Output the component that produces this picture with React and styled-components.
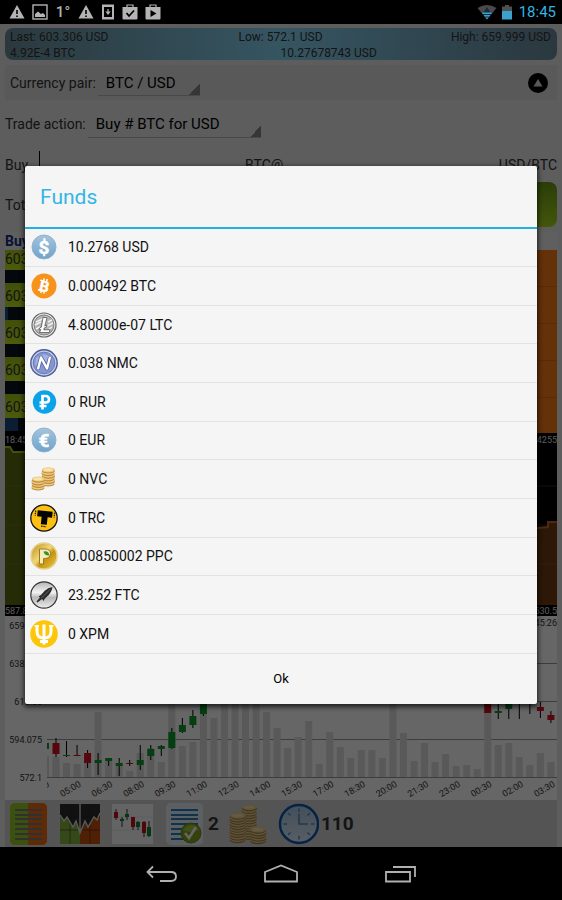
import React from 'react';
import styled, { createGlobalStyle } from 'styled-components';

const GlobalStyle = createGlobalStyle`
  *, *::before, *::after { box-sizing: border-box; }
  body {
    margin: 0;
    background: #000;
    font-family: Roboto, "Liberation Sans", sans-serif;
    font-size: 14px;
    color: #333;
  }
  button, input, select { font: inherit; color: inherit; }
  ul { list-style: none; margin: 0; padding: 0; }
`;

/* --- device --- */
const Device = styled.div`
  min-height: 100vh;
  display: flex;
  flex-direction: column;
`;

const StatusBar = styled.header`
  height: 24px;
  padding: 0 6px 0 9px;
  display: flex;
  align-items: center;
  justify-content: space-between;
  background: #000;
  color: #b4b4b4;
`;

const StatusGroup = styled.div`
  display: flex;
  align-items: center;
  gap: ${({ $gap }) => $gap}px;

  svg { display: block; }
`;

const Temperature = styled.span`
  width: 16px;
  text-align: center;
  font-size: 15px;
  font-weight: 500;
`;

const Clock = styled.time`
  font-size: 15px;
  line-height: 24px;
  color: #33b5e5;
  margin-left: 2px;
`;

const Screen = styled.main`
  position: relative;
  flex: 1;
  display: flex;
  flex-direction: column;
  padding: 4px 5px 0;
  background: #e8e8e8;
`;

const NavBar = styled.nav`
  height: 53px;
  display: flex;
  justify-content: center;
  background: #000;
`;

const NavButton = styled.button`
  width: 120px;
  padding: 0;
  border: 0;
  background: none;
  display: flex;
  align-items: center;
  justify-content: center;
`;

/* --- ticker --- */
const Ticker = styled.section`
  height: 32px;
  padding: 1px 6px 0 5px;
  border-radius: 8px;
  background: linear-gradient(90deg, #6c8f9e, #86d5f4 50%, #6c8c9e);
  font-size: 12px;
  line-height: 16px;
`;

const TickerRow = styled.div`
  display: grid;
  grid-template-columns: 1fr auto 1fr;

  span:last-child { text-align: right; }
`;

const BalanceRow = styled.div`
  display: grid;
  grid-template-columns: 1fr 1fr;
`;

/* --- form --- */
const FormRow = styled.div`
  display: flex;
  align-items: center;
  height: ${({ $height }) => $height}px;
  padding: ${({ $boxed }) => ($boxed ? '0 9px 0 5px' : '0')};
  margin-top: ${({ $boxed }) => ($boxed ? 5 : 0)}px;
  background: ${({ $boxed }) => ($boxed ? '#dfdfdf' : 'none')};
`;

const Spinner = styled.select`
  appearance: none;
  width: ${({ $width }) => $width}px;
  height: 27px;
  margin-left: 2px;
  padding: 1px 12px 0 8px;
  border: 0;
  border-bottom: 1px solid #b5b5b5;
  border-radius: 0;
  background: linear-gradient(135deg, transparent 50%, #888 50%) right bottom / 11px 11px no-repeat;
  font-size: 15px;
  color: #000;
`;

const Collapse = styled.button`
  margin-left: auto;
  width: 20px;
  height: 20px;
  padding: 0;
  border: 0;
  border-radius: 50%;
  background: #000;
  display: flex;
  align-items: center;
  justify-content: center;
`;

const AmountRow = styled.div`
  display: grid;
  grid-template-columns: 240px auto 1fr;
  align-items: center;
  height: 34px;

  > span:last-child { text-align: right; }
`;

const Amount = styled.label`
  display: flex;
  align-items: center;
`;

const AmountInput = styled.input`
  width: 120px;
  height: 28px;
  margin-left: 11px;
  padding: 0;
  border: 0;
  border-left: 1px solid #000;
  background: none;
`;

const TradeButton = styled.button`
  margin-left: auto;
  width: 140px;
  height: 45px;
  border: 0;
  border-radius: 8px;
  background: linear-gradient(#6a9a16, #a8d81e);
`;

/* --- order book --- */
const BookTitle = styled.h2`
  height: 18px;
  margin: 5px 0 0;
  background: #ededed;
  font-size: 14px;
  font-weight: 700;
  line-height: 18px;
  color: #142c80;
`;

const Book = styled.section`
  display: grid;
  grid-template-columns: 1fr 1fr;
  grid-template-rows: 100%;
  height: 183px;
  overflow: hidden;
`;

const Bids = styled.ul`
  display: flex;
  flex-direction: column;
  justify-content: flex-end;
  padding-bottom: 2px;
  background: #000;
`;

const Bid = styled.li`
  flex: none;
  padding-bottom: 13px;
  background: linear-gradient(90deg, #1b4a80 ${({ $depth }) => $depth}px, #0a1420 ${({ $depth }) => $depth}px);

  span {
    display: block;
    height: 24px;
    line-height: 26px;
    font-size: 14px;
    background: linear-gradient(#a4c41a, #c0e41c);
  }
`;

const Asks = styled.div`
  background: repeating-linear-gradient(#fa7a16 0 36px, #e06a10 36px 37px);
`;

const Strip = styled.div`
  display: flex;
  justify-content: space-between;
  align-items: center;
  height: ${({ $height }) => $height}px;
  background: #000;
  color: #e0e0e0;
  font-size: 9px;
`;

const Chart = styled.svg`
  display: block;
  width: 100%;
  height: auto;
  background: ${({ $dark }) => ($dark ? '#000' : '#fff')};
  font-size: 9px;
`;

/* --- bottom toolbar --- */
const Toolbar = styled.footer`
  flex: 1;
  min-height: 47px;
  display: flex;
  align-items: center;
  gap: 10px;
  padding-left: 3px;
  background: #d2d2d2;
`;

const Tool = styled.button`
  display: flex;
  align-items: center;
  gap: 2px;
  padding: 0;
  border: 0;
  background: none;
  font-size: 19px;
  font-weight: 700;

  svg { display: block; }
`;

/* --- dialog --- */
const Scrim = styled.div`
  position: absolute;
  inset: 0;
  display: flex;
  align-items: center;
  justify-content: center;
  padding: 0 25px 2px;
  background: rgba(0, 0, 0, .6);
`;

const Dialog = styled.section`
  width: 100%;
  border-radius: 2px;
  background: #f5f5f5;
  box-shadow: 0 2px 5px 1px rgba(0, 0, 0, .7);
`;

const DialogTitle = styled.h1`
  margin: 0;
  padding: 1px 15px 0;
  border-bottom: 2px solid #22b0e2;
  font-size: 21px;
  font-weight: 400;
  line-height: 60px;
  color: #33b5e5;
`;

const FundList = styled.ul`
  display: grid;
  grid-auto-rows: 1fr;
  height: 425px;
`;

const Fund = styled.li`
  display: flex;
  align-items: center;
  gap: 10px;
  padding-left: 5px;
  border-bottom: 1px solid #e2e2e2;
  color: #111;

  svg { display: block; }
`;

const OkButton = styled.button`
  display: block;
  width: 100%;
  height: 50px;
  padding: 0;
  border: 0;
  background: none;
  font-size: 13px;
  color: #000;
`;

/* --- status icons --- */
const Warning = () => (
  <svg width="16" height="16" viewBox="0 0 16 16">
    <path d="M8 1 L15.5 14.500 H.5Z" fill="#b4b4b4" />
    <path d="M8 6V10M8 11.500V13" stroke="#000" strokeWidth="1.600" />
  </svg>
);

const Picture = () => (
  <svg width="16" height="16" viewBox="0 0 16 16">
    <rect x="1" y="1" width="14" height="14" fill="none" stroke="#b4b4b4" strokeWidth="1.400" />
    <path d="M3 13V10L6 7.500L9 10L11 9L13 11V13Z" fill="#b4b4b4" />
  </svg>
);

const Download = () => (
  <svg width="14" height="16" viewBox="0 0 14 16">
    <rect x="1" y=".5" width="12" height="15" fill="#b4b4b4" />
    <rect x="3" y="3" width="8" height="10" fill="#000" />
    <path d="M7 5V8.500M5.500 8L7 10L8.500 8Z" stroke="#b4b4b4" strokeWidth="1.200" fill="#b4b4b4" />
  </svg>
);

const Bag = ({ children }) => (
  <svg width="16" height="16" viewBox="0 0 16 16">
    <path d="M5 4V1H11V4" fill="none" stroke="#b4b4b4" strokeWidth="1.200" />
    <path d="M.5 3H15.500V14.500Q15.500 15.500 14.500 15.500H1.500Q.5 15.500 .5 14.500Z" fill="#b4b4b4" />
    {children}
  </svg>
);

const Wifi = () => (
  <svg width="20" height="16" viewBox="0 0 20 16">
    <path d="M10 15.500L.5 4Q10-2 19.500 4Z" fill="#4a4a4a" />
    <path d="M10 15.500L5 9Q10 6.500 15 9Z" fill="#33a5d0" />
    <path d="M10 3L13.500 8.500H6.500Z" fill="#1c2c34" />
    <path d="M6 10.500H14M8 13H12" stroke="#0c3040" />
  </svg>
);

const Battery = () => (
  <svg width="10" height="16" viewBox="0 0 10 16">
    <path d="M3 1H7V2.500H10V7H0V2.500H3Z" fill="#505050" />
    <rect y="7" width="10" height="8.500" fill="#3aa2cc" />
  </svg>
);

/* --- coins --- */
const GlossyCoin = ({ id, sign }) => (
  <svg width="28" height="28" viewBox="0 0 28 28">
    <defs>
      <linearGradient id={id} x1="0" y1="0" x2="0" y2="1">
        <stop offset="0" stopColor="#a5c4dd" />
        <stop offset="1" stopColor="#6fa3cb" />
      </linearGradient>
    </defs>
    <circle cx="14" cy="14" r="12" fill={`url(#${id})`} stroke="#8fb2cd" />
    <text
      x="14"
      y="20.500"
      fontSize="19"
      fontWeight="700"
      textAnchor="middle"
      fill="#fff"
      stroke="#fff"
      strokeWidth=".5"
    >
      {sign}
    </text>
  </svg>
);

const Bitcoin = () => (
  <svg width="28" height="28" viewBox="0 0 28 28">
    <circle cx="14" cy="14" r="12.500" fill="#f7931a" />
    <g transform="rotate(13 14 14)" fill="#fff" stroke="#fff">
      <text x="14.500" y="19.500" fontSize="15" fontWeight="700" textAnchor="middle" strokeWidth=".4">B</text>
      <path d="M12.500 6.500V9M15.500 6.500V9M12.500 19V21.500M15.500 19V21.500M9 9.200H12M9 19H12" strokeWidth="1.500" />
    </g>
  </svg>
);

const Litecoin = () => (
  <svg width="28" height="28" viewBox="0 0 28 28">
    <circle cx="14" cy="14" r="12" fill="#e8e8e8" stroke="#666" strokeWidth="1.200" />
    <circle cx="14" cy="14" r="10" fill="#b4b4b4" stroke="#808080" />
    <path d="M6 11L17 6M5 14L11 11M18 11L22 9M17 15L23 12M6 18L10 16M19 18L22 16" stroke="#f0f0f0" strokeWidth="1.400" />
    <path d="M13 6.500H17L14.800 15L17 14L16.500 16L14.200 17L13.800 18.800H20L19.300 21.500H9.500L10.800 18.300L9 19L9.500 17L11.300 16.200Z" fill="#fff" stroke="#555" strokeWidth=".8" />
  </svg>
);

const Namecoin = () => (
  <svg width="28" height="28" viewBox="0 0 28 28">
    <circle cx="14" cy="14" r="13.200" fill="#c4cdea" stroke="#4c5c94" strokeWidth="1.400" />
    <circle cx="14" cy="14" r="10.800" fill="#8496d2" stroke="#6c7cb8" />
    <path d="M6 9Q14 2 22 9Q20 13 14 13T5 17Z" fill="#a4b2e2" />
    <path d="M8 20L11 8.500L17 19.500L20 8" fill="none" stroke="#5b69a0" strokeWidth="4" strokeLinejoin="round" />
    <path d="M8 20L11 8.500L17 19.500L20 8" fill="none" stroke="#fff" strokeWidth="2.400" strokeLinejoin="round" />
  </svg>
);

const Ruble = () => (
  <svg width="28" height="28" viewBox="0 0 28 28">
    <circle cx="14.500" cy="14" r="11.700" fill="#0aa2e8" />
    <path d="M12.500 21.500V8H15.500Q19 8 19 11.200T15.500 14.500H9.500M9.500 18H16.500" fill="none" stroke="#fff" strokeWidth="2.600" />
  </svg>
);

const Stack = ({ x, y, count, rx, edge = '#b27f32', top = '#eccb80' }) => (
  <g>
    {Array.from({ length: count }, (_, i) => (
      <g key={i}>
        <ellipse cx={x + (i % 2) * 0.4} cy={y - i * 2.6} rx={rx} ry={rx * 0.4} fill={edge} />
        <ellipse cx={x + (i % 2) * 0.4} cy={y - i * 2.6 - 1.2} rx={rx} ry={rx * 0.4} fill={top} />
      </g>
    ))}
    <ellipse cx={x} cy={y - count * 2.6 + 1.4} rx={rx * 0.7} ry={rx * 0.22} fill="#f8e3ae" />
  </g>
);

const Novacoin = () => (
  <svg width="28" height="28" viewBox="0 0 28 28">
    <Stack x={18} y={19} count={6} rx={6.5} edge="#c08a3c" />
    <Stack x={8} y={23} count={4} rx={6.5} edge="#c08a3c" />
  </svg>
);

const Terracoin = () => (
  <svg width="28" height="28" viewBox="0 0 28 28">
    <circle cx="14" cy="14" r="13.200" fill="#fbc010" stroke="#111" strokeWidth="1.300" />
    <g transform="rotate(6 14 14)">
      <path d="M7 7H22V13H17.500V20.500H11.500V13H7Z" fill="#050505" />
      <path d="M5 7.500V12.500M24 7.500V12.500M12 22.500H17" stroke="#222" strokeWidth="1.300" strokeDasharray="1.500 .7" />
    </g>
  </svg>
);

const Peercoin = () => (
  <svg width="28" height="28" viewBox="0 0 28 28">
    <defs>
      <linearGradient id="ppc" x1="0" y1="0" x2="1" y2="1">
        <stop offset="0" stopColor="#b98a1c" />
        <stop offset=".45" stopColor="#f0d878" />
        <stop offset=".6" stopColor="#c4920e" />
        <stop offset="1" stopColor="#f0cf50" />
      </linearGradient>
    </defs>
    <circle cx="14" cy="14" r="13" fill="url(#ppc)" stroke="#e6cf88" strokeWidth="1.500" />
    <path d="M9.500 7H15Q20.500 7 20.500 11.500T15 16.500H13.500V22H9.500Z" fill="#f4ecc0" stroke="#a07a1c" strokeWidth="1" />
    <path d="M13.500 9.500Q18.500 8 19.500 13.500Q14.500 14 13.500 9.500Z" fill="#3f8f24" />
  </svg>
);

const Feathercoin = () => (
  <svg width="28" height="28" viewBox="0 0 28 28">
    <defs>
      <linearGradient id="ftc" x1="0" y1="0" x2="0" y2="1">
        <stop offset="0" stopColor="#b4b4b4" />
        <stop offset=".4" stopColor="#f2f2f2" />
        <stop offset=".6" stopColor="#b8b8b8" />
        <stop offset="1" stopColor="#eee" />
      </linearGradient>
    </defs>
    <circle cx="14" cy="14" r="13.200" fill="url(#ftc)" stroke="#333" strokeWidth="1.200" />
    <path d="M22.500 6Q21.500 12 17 15.500L14.500 18L13.800 20L12 18L7.500 21.500L6.500 20.500L10 16.500L8.500 15.500L11 14L14.500 10Q18 6.500 22.500 6Z" fill="#2a2a2a" />
    <path d="M11.500 17L20 8.500" stroke="#777" strokeWidth=".8" />
  </svg>
);

const Primecoin = () => (
  <svg width="28" height="28" viewBox="0 0 28 28">
    <circle cx="14" cy="14" r="13.800" fill="#fdc608" />
    <path d="M7 5V11.500Q7 18 14 18T21 11.500V5M14 4.500V24.500M10 21.500H18" fill="none" stroke="#fff" strokeWidth="3" />
    <path d="M4.500 6H9M19 6H23.500" stroke="#fff" strokeWidth="1.500" />
  </svg>
);

const funds = [
  { text: '10.2768 USD', icon: <GlossyCoin id="usd" sign="$" /> },
  { text: '0.000492 BTC', icon: <Bitcoin /> },
  { text: '4.80000e-07 LTC', icon: <Litecoin /> },
  { text: '0.038 NMC', icon: <Namecoin /> },
  { text: '0 RUR', icon: <Ruble /> },
  { text: '0 EUR', icon: <GlossyCoin id="eur" sign="€" /> },
  { text: '0 NVC', icon: <Novacoin /> },
  { text: '0 TRC', icon: <Terracoin /> },
  { text: '0.00850002 PPC', icon: <Peercoin /> },
  { text: '23.252 FTC', icon: <Feathercoin /> },
  { text: '0 XPM', icon: <Primecoin /> },
];

/* --- candle chart --- */
const STEP = 10.53;
const candleX = (i) => 51 + i * STEP;

// top of every volume bar, first one is cut by the axis
const volumes = [
  140, 141, 147, 148, 144, 96, 145, 150, 155, 137, 132, 146, 84, 130, 126, 74, 102,
  74, 74, 74, 74, 96, 112, 132, 121, 105, 148, 116, 131, 142, 134, 134, 142, 74, 117,
  145, 127, 146, 138, 150, 149, 153, 74, 129, 127, 141, 149, 137, 146,
];

// [index, high, low, body top, body bottom, rising]
const candles = [
  [-1, 127, 133, 127, 133, 1], [0, 122, 141, 127, 138, 0], [1, 125, 141, 139, 140, 1],
  [2, 129, 140, 139, 140, 0], [3, 134, 152, 137, 147, 0], [4, 137, 159, 144, 147, 1],
  [5, 142, 150, 142, 145, 1], [6, 142, 160, 147, 150, 1], [7, 144, 150, 147, 148, 0],
  [8, 129, 154, 144, 149, 1], [9, 129, 144, 133, 140, 1], [10, 129, 140, 130, 133, 1],
  [11, 112, 133, 116, 132, 1], [12, 102, 117, 109, 116, 1], [13, 94, 112, 100, 109, 1],
  [14, 80, 100, 84, 98, 1], [41, 76, 97, 80, 97, 0], [42, 80, 103, 95, 97, 1],
  [43, 80, 103, 86, 93, 1], [44, 80, 103, 80, 81, 1], [45, 80, 98, 80, 81, 1],
  [46, 86, 102, 91, 95, 0], [47, 95, 107, 99, 104, 0],
];

const prices = ['659.999', '638.025', '616.05', '594.075', '572.1'];
const times = [
  '03:30', '05:00', '06:30', '08:00', '09:30', '11:00', '12:30', '14:00', '15:30',
  '17:00', '18:30', '20:00', '21:30', '23:00', '00:30', '02:00', '03:30',
];

const CandleChart = () => (
  <Chart viewBox="0 0 552 184">
    <clipPath id="plot"><rect x="42" y="0" width="510" height="184" /></clipPath>
    {prices.map((price, i) => (
      <g key={price}>
        <path d={`M42 ${9.5 + i * 38}H552`} stroke="#999" />
        <text x="37" y={13 + i * 38} textAnchor="end" fill="#333">{price}</text>
      </g>
    ))}
    <rect x="500" y="0" width="52" height="13" fill="#fff" />
    <text x="552" y="10" textAnchor="end" fill="#333">18:45:26</text>
    <g clipPath="url(#plot)">
      {volumes.map((top, i) => (
        <rect key={i} x={candleX(i - 1) - 3.5} y={top} width="7" height={161 - top} fill="#dedede" />
      ))}
      {candles.map(([i, high, low, top, bottom, up]) => (
        <g key={i}>
          <path d={`M${candleX(i)} ${high}V${low}`} stroke="#000" />
          <rect x={candleX(i) - 3.5} y={top} width="7" height={bottom - top} fill={up ? '#0c9c2c' : '#d81020'} />
        </g>
      ))}
      {times.map((time, i) => (
        <text
          key={i}
          transform={`translate(${45 + i * 31.6} 170) rotate(-30)`}
          textAnchor="end"
          fill="#333"
        >
          {time}
        </text>
      ))}
    </g>
  </Chart>
);

const DepthChart = () => (
  <Chart $dark viewBox="0 0 552 159">
    <path d="M0 40H552M0 79H552M0 118H552" stroke="#2c2c2c" />
    <path d="M0 1H5L8 6H20L60 20L150 60L260 159H0Z" fill="#5c6c12" />
    <path d="M0 1H5L8 6H20L60 20L150 60L260 159" fill="none" stroke="#a8cc18" strokeWidth="2" />
    <path d="M290 159L400 110L500 84L532 82L543 81V76H552V159Z" fill="#703a10" />
    <path d="M290 159L400 110L500 84L532 82L543 81V76H552" fill="none" stroke="#c8641c" strokeWidth="2" />
    <path d="M0 40H240M0 79H240M0 118H240M400 118H552" stroke="#7a8440" strokeOpacity=".4" />
  </Chart>
);

/* --- toolbar icons --- */
const lines = [7, 12, 16, 21, 26, 31, 36];

const BookIcon = () => (
  <svg width="42" height="42" viewBox="0 0 42 42">
    <path d="M20 0H7Q2 0 2 5V37Q2 42 7 42H20Z" fill="#9acb24" />
    <path d="M20 0H34Q39 0 39 5V37Q39 42 34 42H20Z" fill="#ee6c10" />
    {lines.map((y) => <path key={y} d={`M7 ${y}H34`} stroke="#74787c" strokeWidth="2" />)}
  </svg>
);

const DepthIcon = () => (
  <svg width="42" height="42" viewBox="0 0 42 42">
    <rect y="1" width="40" height="40" fill="#2c2c2c" />
    <path d="M0 12L4 18L7 14L13 24L16 18L20 30V41H0Z" fill="#86b43c" />
    <path d="M20 30L25 18L28 24L34 14L37 17L40 10V41H20Z" fill="#c8500c" />
    <path d="M0 14H40M0 27H40M10 1V41M30 1V41" stroke="#222" strokeOpacity=".5" />
    <path d="M0 12L4 18L7 14L13 24L16 18L20 30L25 18L28 24L34 14L37 17L40 10M20 1V30" fill="none" stroke="#ddd" strokeWidth="1.400" />
  </svg>
);

const miniCandles = [
  [4, 6, 17, 9, 15, 0], [10, 14, 24, 16, 18, 1], [15, 6, 17, 11, 14, 1], [21, 14, 27, 14, 24, 0],
  [26, 18, 27, 19, 24, 1], [32, 18, 34, 19, 30, 0], [37, 18, 34, 24, 33, 1],
];

const CandlesIcon = () => (
  <svg width="42" height="42" viewBox="0 0 42 42">
    <rect y="1" width="41" height="40" fill="#fbfbfb" />
    <path d="M0 14H41M0 27H41" stroke="#e8e8e8" />
    {miniCandles.map(([x, high, low, top, bottom, up]) => (
      <g key={x}>
        <path d={`M${x} ${high}V${low}`} stroke="#333" />
        <rect x={x - 2} y={top} width="4" height={bottom - top} fill={up ? '#0c8c24' : '#c8101c'} />
      </g>
    ))}
  </svg>
);

const OrdersIcon = () => (
  <svg width="42" height="42" viewBox="0 0 42 42">
    <rect x="2" y="0" width="37" height="42" rx="5" fill="#e6f0f8" />
    {lines.map((y) => <path key={y} d={`M7 ${y}H34`} stroke="#2480b8" strokeWidth="2" />)}
    <circle cx="27" cy="30" r="10" fill="#86a41c" stroke="#6c8814" />
    <path d="M19 27Q27 17 35 27Q27 31 19 27Z" fill="#a9c24a" />
    <path d="M21 30L25 35L32 24" fill="none" stroke="#fff" strokeWidth="2.500" />
  </svg>
);

const toolStacks = [
  { x: 20, y: 34, count: 12, rx: 7.5 },
  { x: 8.5, y: 37, count: 10, rx: 8 },
  { x: 29, y: 38, count: 5, rx: 8 },
];

const CoinsIcon = () => (
  <svg width="38" height="42" viewBox="0 0 38 42">
    {toolStacks.map((stack) => <Stack key={stack.x} {...stack} edge="#a88444" top="#e8cf92" />)}
  </svg>
);

const ticks = [0, 45, 90, 135, 180, 225, 270, 315];

const ClockIcon = () => (
  <svg width="42" height="42" viewBox="0 0 42 42">
    <defs>
      <linearGradient id="face" x1="0" y1="0" x2="0" y2="1">
        <stop offset="0" stopColor="#a8c4e0" />
        <stop offset="1" stopColor="#dcecfa" />
      </linearGradient>
    </defs>
    <circle cx="22" cy="21" r="19" fill="url(#face)" stroke="#0c58b0" strokeWidth="2.500" />
    {ticks.map((angle) => (
      <path key={angle} d="M22 5.500V9" stroke="#5c8cbc" strokeWidth="1.500" transform={`rotate(${angle} 22 21)`} />
    ))}
    <path d="M22 10.500V21H31" fill="none" stroke="#5c8cbc" strokeWidth="1.600" />
  </svg>
);

export default function App() {
  return (
    <Device>
      <GlobalStyle />
      <StatusBar>
        <StatusGroup $gap={7}>
          <Warning />
          <Picture />
          <Temperature>1°</Temperature>
          <Warning />
          <Download />
          <Bag><path d="M4.500 9L7 12L12 6.500" fill="none" stroke="#000" strokeWidth="1.800" /></Bag>
          <Bag><path d="M5.500 6L11.500 9.500L5.500 13Z" fill="#000" /></Bag>
        </StatusGroup>
        <StatusGroup $gap={5}>
          <Wifi />
          <Battery />
          <Clock>18:45</Clock>
        </StatusGroup>
      </StatusBar>

      <Screen>
        <Ticker>
          <TickerRow>
            <span>Last: 603.306 USD</span>
            <span>Low: 572.1 USD</span>
            <span>High: 659.999 USD</span>
          </TickerRow>
          <BalanceRow>
            <span>4.92E-4 BTC</span>
            <span>10.27678743 USD</span>
          </BalanceRow>
        </Ticker>

        <FormRow $boxed $height={35}>
          <label htmlFor="pair">Currency pair:</label>
          <Spinner id="pair" $width={102} defaultValue="btc_usd">
            <option value="btc_usd">BTC / USD</option>
          </Spinner>
          <Collapse aria-label="Collapse">
            <svg width="10" height="10" viewBox="0 0 10 10"><path d="M5 1L9.500 8.500H.5Z" fill="#ddd" /></svg>
          </Collapse>
        </FormRow>
        <FormRow $height={48}>
          <label htmlFor="action">Trade action:</label>
          <Spinner id="action" $width={173} defaultValue="buy">
            <option value="buy">Buy # BTC for USD</option>
          </Spinner>
        </FormRow>
        <AmountRow>
          <Amount>Buy <AmountInput /></Amount>
          <span>BTC@</span>
          <span>USD/BTC</span>
        </AmountRow>
        <FormRow $height={45}>
          <span>Total</span>
          <TradeButton aria-label="Trade" />
        </FormRow>

        <BookTitle>Buy</BookTitle>
        <Book>
          <Bids>
            {[0, 3, 0, 0, 13].map((depth, i) => (
              <Bid key={i} $depth={depth}><span>603</span></Bid>
            ))}
          </Bids>
          <Asks />
        </Book>
        <Strip $height={13}><span>18:45</span><span>4255</span></Strip>
        <DepthChart />
        <Strip $height={11}><span>587.8</span><span>630.5</span></Strip>
        <CandleChart />

        <Toolbar>
          <Tool aria-label="Order book"><BookIcon /></Tool>
          <Tool aria-label="Depth"><DepthIcon /></Tool>
          <Tool aria-label="Candles"><CandlesIcon /></Tool>
          <Tool><OrdersIcon />2</Tool>
          <Tool aria-label="Funds"><CoinsIcon /></Tool>
          <Tool><ClockIcon />110</Tool>
        </Toolbar>

        <Scrim>
          <Dialog role="dialog" aria-labelledby="funds-title">
            <DialogTitle id="funds-title">Funds</DialogTitle>
            <FundList>
              {funds.map(({ text, icon }) => (
                <Fund key={text}>{icon}{text}</Fund>
              ))}
            </FundList>
            <OkButton>Ok</OkButton>
          </Dialog>
        </Scrim>
      </Screen>

      <NavBar>
        <NavButton aria-label="Back">
          <svg width="32" height="20" viewBox="0 0 32 20" fill="none" stroke="#b0b0b0" strokeWidth="1.800">
            <path d="M2 8H26Q31 8 31 12.500T26 17H15M8 2.500L2.500 8L8 13.500" />
          </svg>
        </NavButton>
        <NavButton aria-label="Home">
          <svg width="36" height="20" viewBox="0 0 36 20" fill="none" stroke="#b0b0b0" strokeWidth="1.800">
            <path d="M2 17.500V8L18 1.500L34 8V17.500Z" />
          </svg>
        </NavButton>
        <NavButton aria-label="Recent apps">
          <svg width="32" height="20" viewBox="0 0 32 20" fill="none" stroke="#b0b0b0" strokeWidth="1.800">
            <path d="M1 8H25V17.500H1ZM8 3H30V13" />
          </svg>
        </NavButton>
      </NavBar>
    </Device>
  );
}
